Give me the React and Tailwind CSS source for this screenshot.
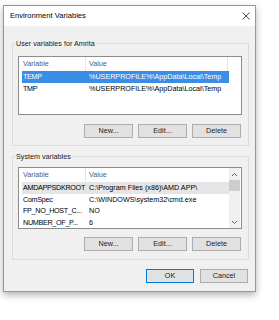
import React from "react";

const userRows = [
  { name: "TEMP", value: "%USERPROFILE%\\AppData\\Local\\Temp", selected: true },
  { name: "TMP", value: "%USERPROFILE%\\AppData\\Local\\Temp" },
];

const systemRows = [
  { name: "AMDAPPSDKROOT", value: "C:\\Program Files (x86)\\AMD APP\\", selected: true },
  { name: "ComSpec", value: "C:\\WINDOWS\\system32\\cmd.exe" },
  { name: "FP_NO_HOST_C...", value: "NO" },
  { name: "NUMBER_OF_P...", value: "6" },
];

function Chevron({ up }) {
  return (
    <svg width="7" height="5" viewBox="0 0 7 5">
      <polyline
        points={up ? "1,4 3.5,1.5 6,4" : "1,1 3.5,3.5 6,1"}
        fill="none"
        stroke="#606060"
        strokeWidth="1"
      />
    </svg>
  );
}

function Header({ lastDivider }) {
  return (
    <div className="flex h-[14px] items-stretch pl-[3px] text-[#4c607a]">
      <div className="flex w-[64px] items-center border-r border-[#e5e5e5] pl-px">Variable</div>
      <div
        className={
          lastDivider
            ? "flex w-[142px] items-center border-r border-[#e5e5e5] pl-[3px]"
            : "flex flex-1 items-center pl-[3px]"
        }
      >
        Value
      </div>
    </div>
  );
}

function Row({ row, focused }) {
  let tone = "text-black";
  if (row.selected) {
    tone = focused ? "bg-[#3a8ee6] text-white" : "bg-[#e5e5e5] text-black";
  }
  return (
    <div className={`flex h-[11.5px] w-[207px] items-center leading-[11px] ${tone}`}>
      <div className="w-[66px] overflow-hidden whitespace-nowrap pl-px tracking-[-0.3px]">
        {row.name}
      </div>
      <div className="flex-1 overflow-hidden whitespace-nowrap pl-px">{row.value}</div>
    </div>
  );
}

function Buttons() {
  return (
    <div className="flex w-[224px] justify-end gap-[5px] pr-px">
      {["New...", "Edit...", "Delete"].map((label) => (
        <div
          key={label}
          className="flex h-[14px] w-[49px] items-center justify-center border border-[#adadad] bg-[#e1e1e1] text-[#1a1a1a]"
        >
          {label}
        </div>
      ))}
    </div>
  );
}

function GroupLabel({ children }) {
  return (
    <span className="absolute -top-[5px] left-[2px] bg-[#f0f0f0] px-px leading-[9px] text-[#1a1a1a]">
      {children}
    </span>
  );
}

export default function App() {
  return (
    <div className="min-h-[320px] bg-white pl-[3px] pt-[5px] font-['Liberation_Sans',Arial,sans-serif] text-[7.2px] leading-none">
      <div className="w-[253px] border border-[#729fd6] bg-[#f0f0f0] shadow-[0_3px_7px_rgba(0,0,0,0.3)]">
        <div className="flex h-[20px] items-center justify-between bg-white pl-[6px] pr-[5px]">
          <span className="text-[7.6px] text-black">Environment Variables</span>
          <svg width="8" height="8" viewBox="0 0 8 8">
            <path d="M0.5 0.5 L7.5 7.5 M7.5 0.5 L0.5 7.5" stroke="#222" strokeWidth="0.8" />
          </svg>
        </div>

        <div className="pb-[8px] pl-[8px]">
          <div className="relative mt-[17px] w-[237px] border border-[#dcdcdc] pb-[7px] pl-[5px] pt-[12px]">
            <GroupLabel>User variables for Amrita</GroupLabel>
            <div className="h-[59px] w-[224px] border border-[#8c8c8c] bg-white">
              <Header lastDivider />
              {userRows.map((row) => (
                <div key={row.name} className="pl-[3px]">
                  <Row row={row} focused />
                </div>
              ))}
            </div>
            <div className="mt-[9px]">
              <Buttons />
            </div>
          </div>

          <div className="relative mt-[10px] w-[237px] border border-[#dcdcdc] pb-[8px] pl-[5px] pt-[10px]">
            <GroupLabel>System variables</GroupLabel>
            <div className="flex h-[62px] w-[224px] border border-[#8c8c8c] bg-white">
              <div className="w-[210px]">
                <Header />
                {systemRows.map((row) => (
                  <div key={row.name} className="pl-[3px]">
                    <Row row={row} />
                  </div>
                ))}
              </div>
              <div className="flex w-[11px] flex-col bg-[#f0f0f0]">
                <div className="flex h-[12px] items-center justify-center">
                  <Chevron up />
                </div>
                <div className="h-[11px] bg-[#cdcdcd]" />
                <div className="flex-1" />
                <div className="flex h-[12px] items-center justify-center">
                  <Chevron />
                </div>
              </div>
            </div>
            <div className="mt-[8px]">
              <Buttons />
            </div>
          </div>

          <div className="mt-[9px] flex w-[237px] justify-end gap-[6px] pr-px">
            <div className="flex h-[14px] w-[48px] items-center justify-center border border-[#0078d7] bg-[#e1e1e1] text-[#1a1a1a]">
              OK
            </div>
            <div className="flex h-[14px] w-[48px] items-center justify-center border border-[#adadad] bg-[#e1e1e1] text-[#1a1a1a]">
              Cancel
            </div>
          </div>
        </div>
      </div>
    </div>
  );
}
